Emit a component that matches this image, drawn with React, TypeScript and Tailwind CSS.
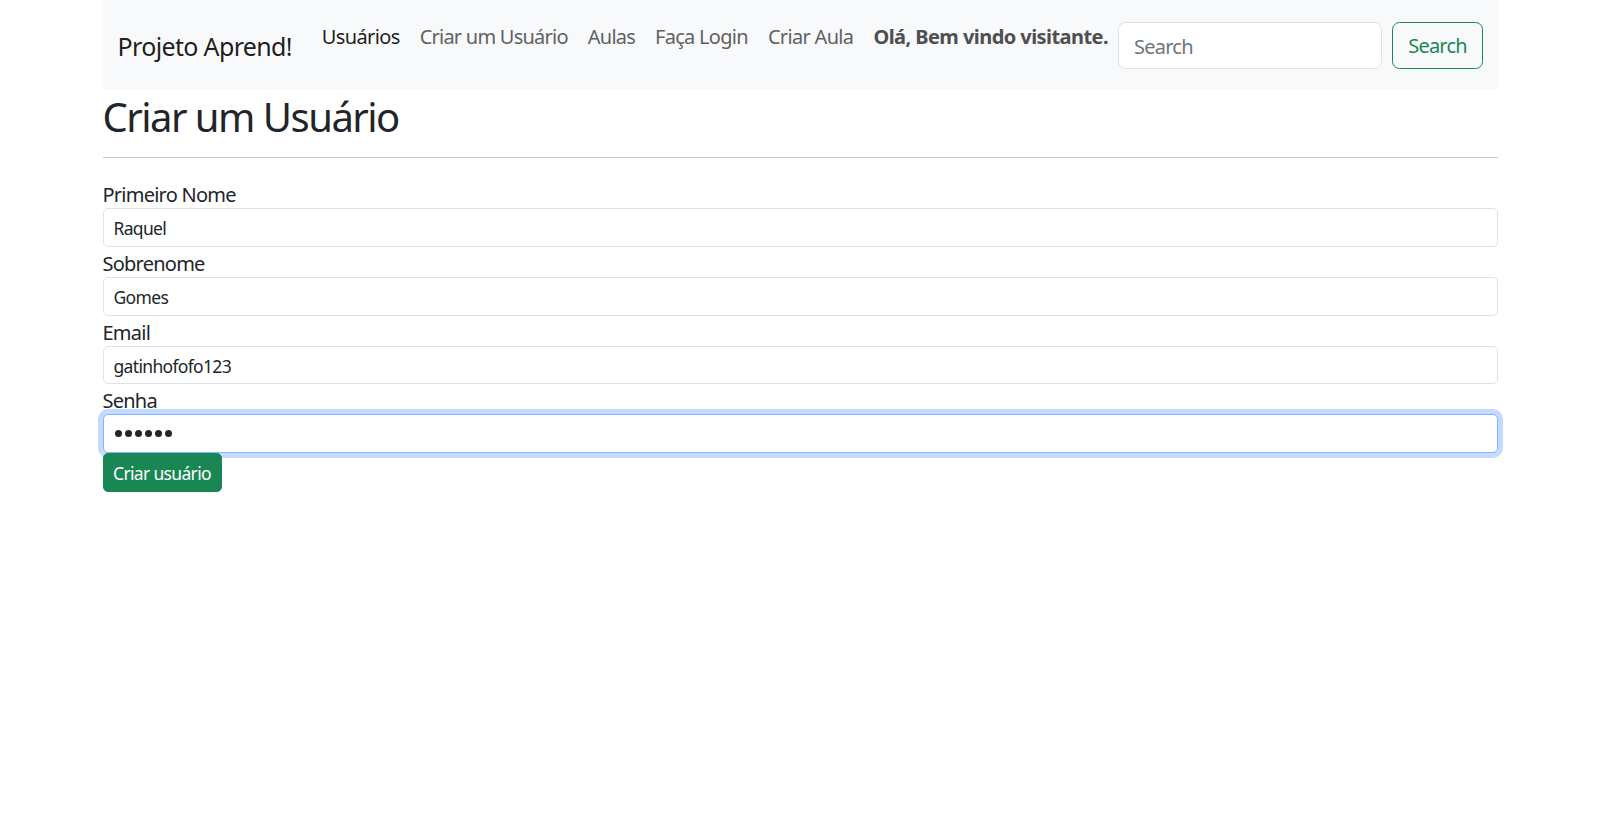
import React from "react";

const T = "tracking-[-0.038em]";

const Field = ({ label, value }: { label: string; value: string }) => (
  <div>
    <label className={`block pt-[3px] text-[20px] leading-[27px] ${T}`}>{label}</label>
    <input
      type="text"
      defaultValue={value}
      className={`block h-[38.75px] w-full rounded-[5px] border border-[#dee2e6] bg-white px-[10px] pt-[2px] text-[17.5px] leading-[26.25px] text-[#212529] outline-none ${T}`}
    />
  </div>
);

const linkCls = "px-[10px] py-[10px] text-[20px] leading-[30px]";

export default function App() {
  return (
    <div className="min-h-screen bg-white font-['Noto_Sans',sans-serif] text-[#212529]">
      <div className="mx-auto w-[1425px] px-[15px]">
        <nav className="flex h-[89px] items-center bg-[#f8f9fa] px-[15px]">
          <a className="mr-[20px] shrink-0 whitespace-nowrap pb-[4.25px] pt-[8.25px] text-[25px] leading-[37.5px] tracking-[-0.026em] text-black/90">Projeto Aprend!</a>
          <ul className="mb-[16px] flex flex-1 items-center whitespace-nowrap">
            <li className={`${linkCls} tracking-[-0.032em] text-black/90`}>Usuários</li>
            <li className={`${linkCls} tracking-[-0.038em] text-[#5f6163]`}>Criar um Usuário</li>
            <li className={`${linkCls} tracking-[-0.038em] text-[#5f6163]`}>Aulas</li>
            <li className={`${linkCls} tracking-[-0.036em] text-[#5f6163]`}>Faça Login</li>
            <li className={`${linkCls} tracking-[-0.034em] text-[#5f6163]`}>Criar Aula</li>
            <li className={`${linkCls} font-bold tracking-[-0.028em] text-[#4d4f51]`}>Olá, Bem vindo visitante.</li>
          </ul>
          <form className="mt-[1.5px] flex shrink-0 items-center gap-[10px]" onSubmit={(e) => e.preventDefault()}>
            <input
              type="search"
              placeholder="Search"
              className={`h-[47.5px] w-[264px] rounded-[7.5px] border border-[#dee2e6] bg-white px-[15px] pt-[2px] text-[20px] text-[#212529] outline-none placeholder:text-[#6c757d] ${T}`}
            />
            <button
              type="submit"
              className={`h-[47.5px] w-[91px] rounded-[7.5px] border border-[#198754] pt-[2px] text-[20px] text-[#198754] ${T}`}
            >
              Search
            </button>
          </form>
        </nav>

        <h2 className={`pt-[7px] text-[40px] font-normal leading-[41px] ${T}`}>Criar um Usuário</h2>
        <hr className="my-[20px] border-0 border-t border-[#c8c9ca]" />

        <form onSubmit={(e) => e.preventDefault()}>
          <Field label="Primeiro Nome" value="Raquel" />
          <Field label="Sobrenome" value="Gomes" />
          <Field label="Email" value="gatinhofofo123" />
          <div>
            <label className={`block pt-[3px] text-[20px] leading-[27px] ${T}`}>Senha</label>
            <div className="flex h-[38.75px] w-full items-center gap-[2.5px] rounded-[5px] border border-[#86b7fe] bg-white px-[11px] shadow-[0_0_0_5px_rgba(13,110,253,0.25)]">
              <span className="h-[7.5px] w-[7.5px] rounded-full bg-[#212529]" />
              <span className="h-[7.5px] w-[7.5px] rounded-full bg-[#212529]" />
              <span className="h-[7.5px] w-[7.5px] rounded-full bg-[#212529]" />
              <span className="h-[7.5px] w-[7.5px] rounded-full bg-[#212529]" />
              <span className="h-[7.5px] w-[7.5px] rounded-full bg-[#212529]" />
              <span className="h-[7.5px] w-[7.5px] rounded-full bg-[#212529]" />
            </div>
          </div>
          <button
            type="submit"
            className={`relative h-[38.75px] w-[119px] rounded-[5px] border border-[#198754] bg-[#198754] pt-[1px] text-[17.5px] text-white ${T}`}
          >
            Criar usuário
          </button>
        </form>
      </div>
    </div>
  );
}
